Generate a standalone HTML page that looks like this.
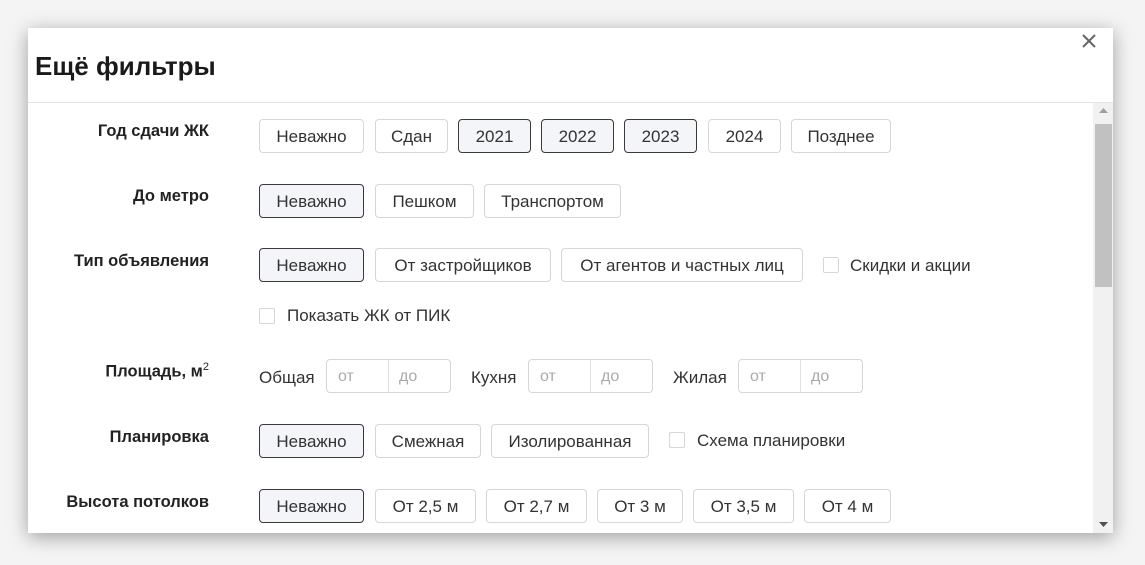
<!DOCTYPE html>
<html><head><meta charset="utf-8"><style>
*{box-sizing:border-box;margin:0;padding:0}
body{width:1145px;height:565px;background:#f4f4f4;font-family:"Liberation Sans",sans-serif;position:relative;overflow:hidden;color:#222}
.m{position:absolute;left:28px;top:28px;width:1085px;height:505px;background:#fff;box-shadow:0 4px 18px rgba(0,0,0,.35)}
.a{position:absolute}
.t{left:7px;top:23px;font-size:26px;font-weight:bold;color:#1a1a1a}
.hl{left:0;top:74px;width:1085px;height:1px;background:#e4e4e4}
.lb{font-size:16.5px;font-weight:bold;text-align:right;width:220px;left:-39px;color:#222}
.b{position:absolute;height:34px;border:1px solid #d6d6d6;border-radius:4px;font-size:17px;color:#333;display:flex;align-items:center;justify-content:center;background:#fff;padding-top:2px}
.s{background:#f3f5f8;border-color:#3a3a3a}
.cb{position:absolute;width:16px;height:16px;border:1px solid #d6d6d6;border-radius:2px}
.tx{position:absolute;font-size:17px;color:#333}
.in{position:absolute;height:34px;width:125px;border:1px solid #d6d6d6;border-radius:4px;font-size:16px;color:#aaa}
.in span{position:absolute;top:8px}
.in i{position:absolute;left:61px;top:0;width:1px;height:32px;background:#e0e0e0}
</style></head><body>
<div class="m">
<div class="a t">Ещё фильтры</div>
<svg class="a" style="left:1054px;top:6px" width="14" height="14" viewBox="0 0 14 14"><path d="M1 1L13 13M13 1L1 13" stroke="#666" stroke-width="2"/></svg>
<div class="a hl"></div>
<div class="a" style="left:1065px;top:75px;width:20px;height:430px;background:#f1f1f1"></div>
<div class="a" style="left:1067px;top:96px;width:17px;height:163px;background:#c1c1c1"></div>
<svg class="a" style="left:1071px;top:80px" width="9" height="6"><path d="M0 5L4.5 0L9 5Z" fill="#a0a0a0"/></svg>
<svg class="a" style="left:1071px;top:494px" width="9" height="6"><path d="M0 0L9 0L4.5 5Z" fill="#505050"/></svg>

<div class="a lb" style="top:94px">Год сдачи ЖК</div>
<div class="a lb" style="top:159px">До метро</div>
<div class="a lb" style="top:224px">Тип объявления</div>
<div class="a lb" style="top:333px">Площадь, м<sup style="font-size:11px;font-weight:normal">2</sup></div>
<div class="a lb" style="top:400px">Планировка</div>
<div class="a lb" style="top:465px">Высота потолков</div>
</div>
<div class="b" style="left:259px;top:119px;width:105px">Неважно</div>
<div class="b" style="left:375px;top:119px;width:73px">Сдан</div>
<div class="b s" style="left:458px;top:119px;width:73px">2021</div>
<div class="b s" style="left:541px;top:119px;width:73px">2022</div>
<div class="b s" style="left:624px;top:119px;width:73px">2023</div>
<div class="b" style="left:708px;top:119px;width:73px">2024</div>
<div class="b" style="left:791px;top:119px;width:100px">Позднее</div>

<div class="b s" style="left:259px;top:184px;width:105px">Неважно</div>
<div class="b" style="left:375px;top:184px;width:99px">Пешком</div>
<div class="b" style="left:484px;top:184px;width:137px">Транспортом</div>

<div class="b s" style="left:259px;top:248px;width:105px">Неважно</div>
<div class="b" style="left:375px;top:248px;width:176px">От застройщиков</div>
<div class="b" style="left:561px;top:248px;width:242px">От агентов и частных лиц</div>
<div class="cb" style="left:823px;top:257px"></div>
<div class="tx" style="left:850px;top:256px">Скидки и акции</div>
<div class="cb" style="left:259px;top:308px"></div>
<div class="tx" style="left:287px;top:306px">Показать ЖК от ПИК</div>

<div class="tx" style="left:259px;top:368px">Общая</div>
<div class="in" style="left:326px;top:359px"><span style="left:11px">от</span><i></i><span style="left:72px">до</span></div>
<div class="tx" style="left:471px;top:368px">Кухня</div>
<div class="in" style="left:528px;top:359px"><span style="left:11px">от</span><i></i><span style="left:72px">до</span></div>
<div class="tx" style="left:673px;top:368px">Жилая</div>
<div class="in" style="left:738px;top:359px"><span style="left:11px">от</span><i></i><span style="left:72px">до</span></div>

<div class="b s" style="left:259px;top:424px;width:105px">Неважно</div>
<div class="b" style="left:375px;top:424px;width:106px">Смежная</div>
<div class="b" style="left:491px;top:424px;width:158px">Изолированная</div>
<div class="cb" style="left:669px;top:432px"></div>
<div class="tx" style="left:697px;top:431px">Схема планировки</div>

<div class="b s" style="left:259px;top:489px;width:105px">Неважно</div>
<div class="b" style="left:375px;top:489px;width:101px">От 2,5 м</div>
<div class="b" style="left:486px;top:489px;width:101px">От 2,7 м</div>
<div class="b" style="left:597px;top:489px;width:86px">От 3 м</div>
<div class="b" style="left:693px;top:489px;width:101px">От 3,5 м</div>
<div class="b" style="left:804px;top:489px;width:87px">От 4 м</div>
</body></html>
